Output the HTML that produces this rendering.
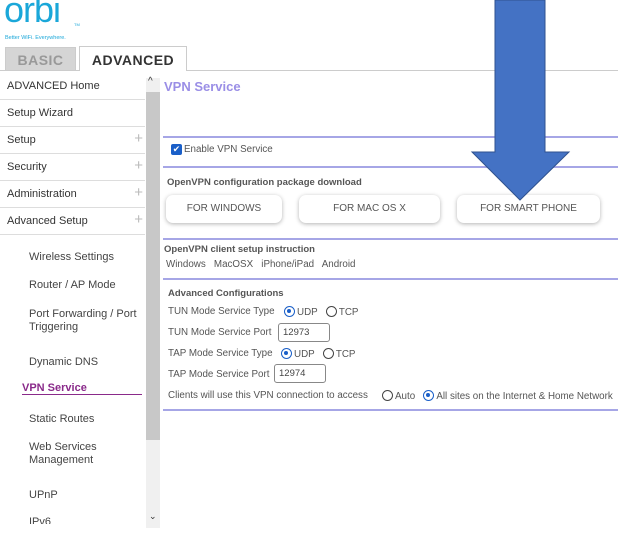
<!DOCTYPE html>
<html><head><style>
*{margin:0;padding:0;box-sizing:border-box}
body{width:618px;height:541px;overflow:hidden;background:#fff;font-family:"Liberation Sans",Arial,sans-serif;position:relative;color:#555}
.a{position:absolute;white-space:nowrap}
.nav{position:absolute;left:0;width:145px;height:27px;border-bottom:1px solid #ddd;font-size:11px;color:#333;padding:7px 0 0 7px}
.nav .p{position:absolute;right:2px;top:3px;color:#bbb;font-size:15px}
.sub{position:absolute;left:29px;font-size:11px;color:#444;line-height:13px}
.hl{position:absolute;left:163px;right:0;height:2px;background:#a6a6e6}
.btn{position:absolute;top:195px;height:28px;border-radius:7px;background:#fff;box-shadow:0 1px 4px rgba(0,0,0,.3);font-size:10px;color:#555;text-align:center;line-height:28px}
.t{font-size:9.8px;color:#555}
.b{font-size:9.5px;font-weight:bold;color:#555}
.r{display:inline-block;width:11px;height:11px;border:1px solid #444;border-radius:50%;vertical-align:-2px;margin-right:2px;position:relative}
.r.on{border-color:#1a5fc8;border-width:1.5px}
.r.on:after{content:"";position:absolute;left:2px;top:2px;width:4px;height:4px;border-radius:50%;background:#1a5fc8}
.inp{position:absolute;height:19px;border:1px solid #888;border-radius:3px;font-size:9.5px;padding:3px 0 0 4px;color:#444}
</style></head><body>
<div class="a" style="left:4px;top:-10px;font-size:36px;line-height:40px;color:#1aa7d9;letter-spacing:-1px">orbi</div>
<div class="a" style="left:74px;top:22px;font-size:4px;color:#1aa7d9">TM</div>
<div class="a" style="left:5px;top:35px;font-size:5.5px;color:#1aa7d9">Better WiFi. Everywhere.</div>
<div class="a" style="left:5px;top:47px;width:71px;height:24px;background:#d5d5d5;border:1px solid #ccc;border-bottom:none;font-weight:bold;font-size:14px;color:#999;text-align:center;line-height:25px;letter-spacing:.5px">BASIC</div>
<div class="a" style="left:79px;top:46px;width:108px;height:25px;background:#fff;border:1px solid #ccc;border-bottom:none;font-weight:bold;font-size:14px;color:#333;text-align:center;line-height:27px;letter-spacing:.5px">ADVANCED</div>
<div class="a" style="left:0;top:70px;width:79px;height:1px;background:#ccc"></div>
<div class="a" style="left:187px;top:70px;right:0;height:1px;background:#ccc"></div>

<div class="nav" style="top:73px">ADVANCED Home</div>
<div class="nav" style="top:100px">Setup Wizard</div>
<div class="nav" style="top:127px">Setup<span class="p">+</span></div>
<div class="nav" style="top:154px">Security<span class="p">+</span></div>
<div class="nav" style="top:181px">Administration<span class="p">+</span></div>
<div class="nav" style="top:208px">Advanced Setup<span class="p">+</span></div>
<div class="sub" style="top:251px">Wireless Settings</div>
<div class="sub" style="top:279px">Router / AP Mode</div>
<div class="sub" style="top:308px">Port Forwarding / Port<br>Triggering</div>
<div class="sub" style="top:356px">Dynamic DNS</div>
<div class="a" style="left:22px;top:382px;font-size:11px;font-weight:bold;color:#8a2a8a">VPN Service</div>
<div class="a" style="left:22px;top:394px;width:120px;height:1px;background:#8a2a8a"></div>
<div class="sub" style="top:413px">Static Routes</div>
<div class="sub" style="top:441px">Web Services<br>Management</div>
<div class="sub" style="top:489px">UPnP</div>
<div class="sub" style="top:516px;height:8px;overflow:hidden">IPv6</div>

<div class="a" style="left:146px;top:78px;width:14px;height:450px;background:#f0f0f0"></div>
<div class="a" style="left:146px;top:92px;width:14px;height:348px;background:#c8c8c8"></div>
<div class="a" style="left:148px;top:76px;font-size:10px;color:#333">&#94;</div>
<div class="a" style="left:149px;top:511px;font-size:9px;color:#333">&#8964;</div>

<div class="a" style="left:164px;top:79px;font-size:13px;font-weight:bold;color:#9a8ee6">VPN Service</div>
<div class="hl" style="top:136px"></div>
<div class="a" style="left:171px;top:144px;width:11px;height:11px;background:#1a5fc8;border-radius:2px;color:#fff;font-size:9px;line-height:11px;text-align:center">&#10004;</div>
<div class="a t" style="left:184px;top:144px">Enable VPN Service</div>
<div class="hl" style="top:166px"></div>
<div class="a b" style="left:167px;top:177px">OpenVPN configuration package download</div>
<div class="btn" style="left:166px;width:116px">FOR WINDOWS</div>
<div class="btn" style="left:299px;width:141px">FOR MAC OS X</div>
<div class="btn" style="left:457px;width:143px">FOR SMART PHONE</div>
<div class="hl" style="top:238px"></div>
<div class="a b" style="left:164px;top:244px">OpenVPN client setup instruction</div>
<div class="a t" style="left:166px;top:259px">Windows&nbsp;&nbsp; MacOSX&nbsp;&nbsp; iPhone/iPad&nbsp;&nbsp; Android</div>
<div class="hl" style="top:278px"></div>
<div class="a b" style="left:168px;top:288px">Advanced Configurations</div>
<div class="a t" style="left:168px;top:306px">TUN Mode Service Type</div>
<div class="a t" style="left:284px;top:306px"><span class="r on"></span>UDP&nbsp;&nbsp;&nbsp;<span class="r"></span>TCP</div>
<div class="a t" style="left:168px;top:327px">TUN Mode Service Port</div>
<div class="inp" style="left:278px;top:323px;width:52px">12973</div>
<div class="a t" style="left:168px;top:348px">TAP Mode Service Type</div>
<div class="a t" style="left:281px;top:348px"><span class="r on"></span>UDP&nbsp;&nbsp;&nbsp;<span class="r"></span>TCP</div>
<div class="a t" style="left:168px;top:369px">TAP Mode Service Port</div>
<div class="inp" style="left:274px;top:364px;width:52px">12974</div>
<div class="a t" style="left:168px;top:390px">Clients will use this VPN connection to access</div>
<div class="a t" style="left:382px;top:390px"><span class="r"></span>Auto&nbsp;&nbsp;&nbsp;<span class="r on"></span>All sites on the Internet &amp; Home Network</div>
<div class="hl" style="top:409px"></div>

<svg class="a" style="left:0;top:0" width="618" height="541"><polygon points="495,0 545,0 545,152 569,152 520,200 472,152 495,152" fill="#4472c4" stroke="#2f528f" stroke-width="1"/></svg>
</body></html>
